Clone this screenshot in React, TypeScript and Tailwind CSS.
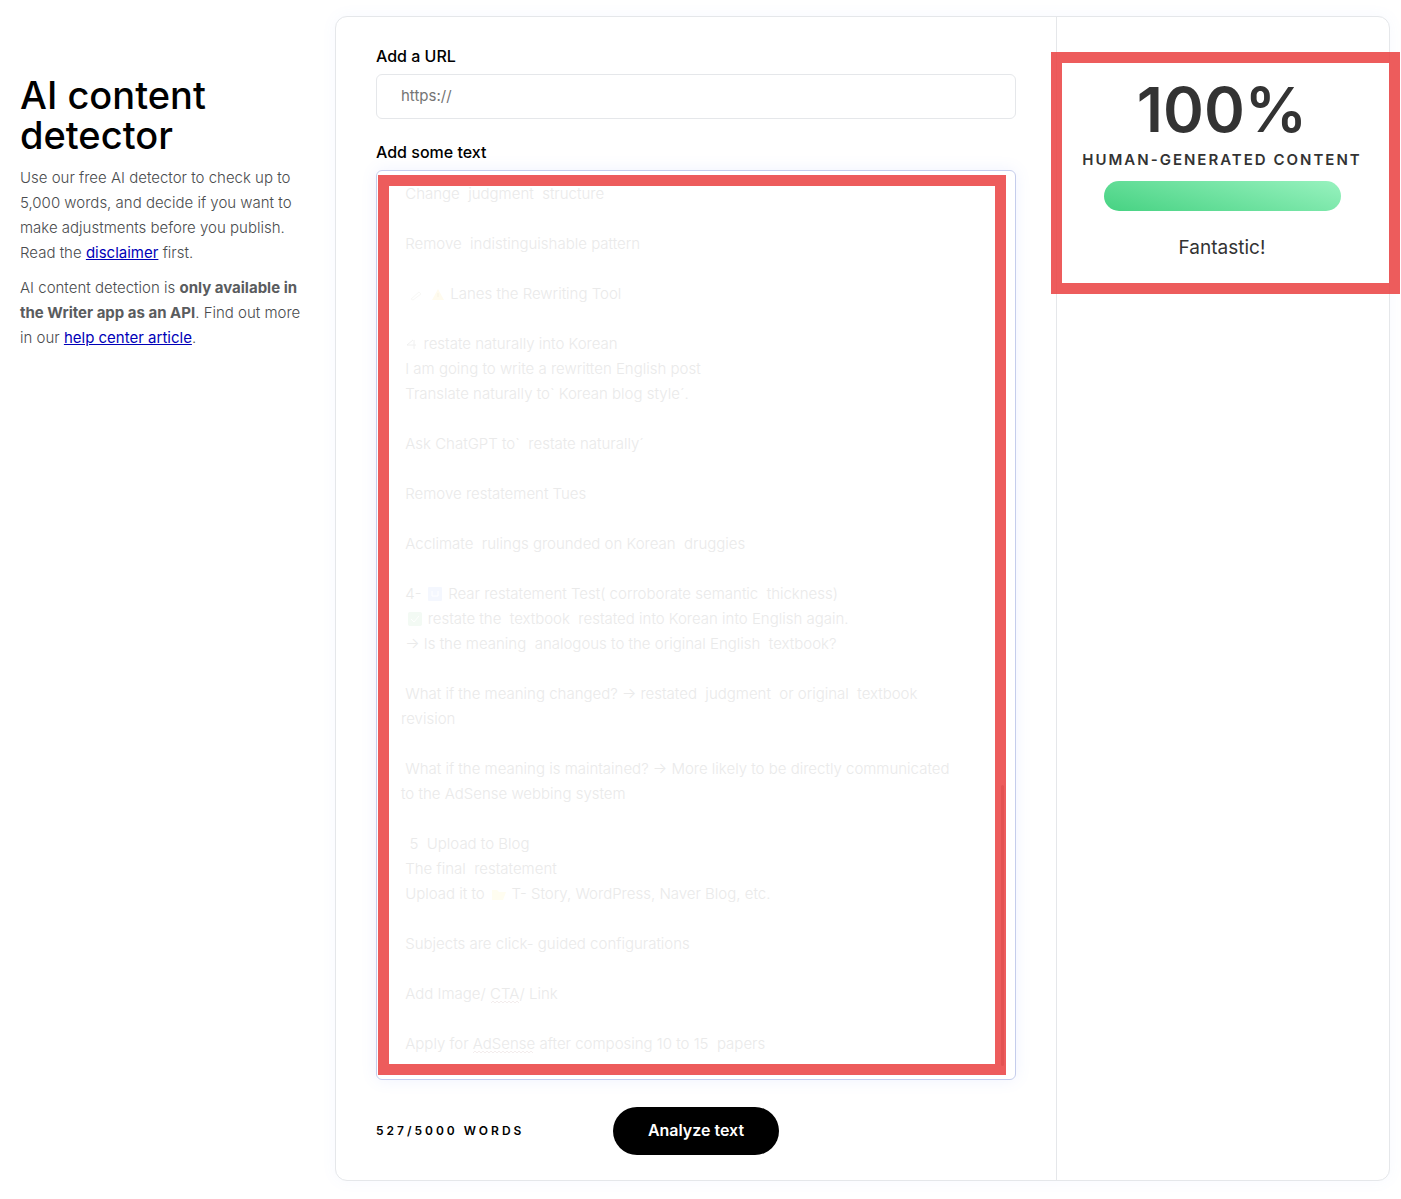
import React from "react";

const lines = [
  " Change  judgment  structure",
  "",
  " Remove  indistinguishable pattern",
  "",
  "\u2003\u2003\u2003 Lanes the Rewriting Tool",
  "",
  "\u2003\u2002restate naturally into Korean",
  " I am going to write a rewritten English post",
  " Translate naturally to` Korean blog style´.",
  "",
  " Ask ChatGPT to`  restate naturally´",
  "",
  " Remove restatement Tues",
  "",
  " Acclimate  rulings grounded on Korean  druggies",
  "",
  " 4-\u2002\u2003 Rear restatement Test( corroborate semantic  thickness)",
  "\u2002\u2003 restate the  textbook  restated into Korean into English again.",
  " → Is the meaning  analogous to the original English  textbook?",
  "",
  " What if the meaning changed? → restated  judgment  or original  textbook\nrevision",
  "",
  " What if the meaning is maintained? → More likely to be directly communicated\nto the AdSense webbing system",
  "",
  "  5  Upload to Blog",
  " The final  restatement",
  " Upload it to\u2003\u2002 T- Story, WordPress, Naver Blog, etc.",
  "",
  " Subjects are click- guided configurations",
  "",
  " Add Image/ CTA/ Link",
  "",
  " Apply for AdSense after composing 10 to 15  papers",
];

function Frame({ className }: { className: string }) {
  return (
    <div
      aria-hidden="true"
      className={`pointer-events-none absolute border-[11px] border-[#ea4646]/88 ${className}`}
    />
  );
}

function Mark({ className, children }: { className: string; children: React.ReactNode }) {
  return (
    <svg
      aria-hidden="true"
      viewBox="0 0 16 16"
      fill="none"
      className={`pointer-events-none absolute size-4 ${className}`}
    >
      {children}
    </svg>
  );
}

function Squiggle({ width, className }: { width: number; className: string }) {
  const steps = Math.floor(width / 4);
  return (
    <svg
      aria-hidden="true"
      width={width}
      height="4"
      fill="none"
      className={`pointer-events-none absolute ${className}`}
    >
      <path d={"M0 3" + "l2-2l2 2".repeat(steps)} stroke="#f3eded" />
    </svg>
  );
}

function TextMarks() {
  return (
    <>
      <Mark className="top-[117px] left-8">
        <path d="M3 12 11 5l2 2-8 6z" stroke="#f8f8f6" />
      </Mark>
      <Mark className="top-[117px] left-[54px]">
        <path d="M8 2 14 13H2z" fill="#fffbee" />
        <path d="M8 6v4" stroke="#f7f3e4" />
      </Mark>
      <Mark className="top-[166px] left-[29px]">
        <path d="M2 9h9M9 4v9M2 9l6-5" stroke="#f0f0f0" />
      </Mark>
      <Mark className="top-[416px] left-[51px]">
        <rect x="1" y="1" width="14" height="14" rx="1" fill="#f4f7fe" />
        <path d="M5 5v5h6V5" stroke="#fff" />
      </Mark>
      <Mark className="top-[441px] left-[31px]">
        <rect x="1" y="1" width="14" height="14" rx="2" fill="#f3faf4" />
        <path d="m4 8 3 3 5-6" stroke="#fff" />
      </Mark>
      <Mark className="top-[716px] left-[115px]">
        <path d="M1 4h5l2 2h7l-3 8H1z" fill="#fffdf0" />
      </Mark>
      <Squiggle width={28} className="top-[830px] left-[115px]" />
      <Squiggle width={60} className="top-[880px] left-[97px]" />
    </>
  );
}

function Intro() {
  return (
    <aside className="w-[319px] shrink-0 pt-[59px] text-[15px] leading-[25px] font-light text-[#4a4c4e]">
      <h1 className="mb-2.5 text-[38px] leading-10 font-medium text-black">
        AI content
        <br />
        detector
      </h1>
      <p className="mb-2.5 w-[284px]">
        Use our free AI detector to check up to 5,000 words, and decide if you want to make
        adjustments before you publish. Read the{" "}
        <a href="#disclaimer" className="font-normal text-[#0000b8] underline">
          disclaimer
        </a>{" "}
        first.
      </p>
      <p className="w-[284px]">
        AI content detection is{" "}
        <b className="font-bold text-[#5a5c5e]">only available in the Writer app as an API</b>. Find
        out more in our{" "}
        <a href="#help" className="font-normal text-[#0000b8] underline">
          help center article
        </a>
        .
      </p>
    </aside>
  );
}

function DetectorForm() {
  return (
    <form
      className="flex min-w-0 flex-1 flex-col px-10 pt-[27px] pb-[25px]"
      onSubmit={(e) => e.preventDefault()}
    >
      <label htmlFor="url" className="text-base leading-6 font-medium text-black">
        Add a URL
      </label>
      <input
        id="url"
        type="text"
        placeholder="https://"
        className="mt-1.5 h-[45px] rounded-md border border-[#e5e7ea] px-6 pb-0.5 text-[15px] outline-none placeholder:text-[#757575]"
      />
      <label htmlFor="text" className="mt-[21px] text-base leading-6 font-medium text-black">
        Add some text
      </label>
      <div className="relative mt-1.5 flex">
        <textarea
          id="text"
          rows={35}
          spellCheck={false}
          defaultValue={lines.join("\n")}
          className="h-[910px] w-full resize-none overflow-hidden rounded-md border border-[#c5cdec] px-6 pt-2.5 text-[15px] leading-[25px] font-light text-[#eaeaea] shadow-[0_0_16px_#5f81ff1a] outline-none"
        />
        <TextMarks />
        <span
          aria-hidden="true"
          className="absolute right-3 bottom-3.5 h-[281px] w-[3px] rounded-full bg-[#aaa]"
        />
        <Frame className="inset-y-[5px] right-[10px] left-0.5" />
      </div>
      <div className="mt-[27px] flex items-center">
        <p className="w-[237px] text-xs font-semibold tracking-[3px] text-black">
          527/5000 WORDS
        </p>
        <button
          type="submit"
          className="h-12 w-[166px] rounded-full bg-black pb-0.5 text-base font-semibold text-white"
        >
          Analyze text
        </button>
      </div>
    </form>
  );
}

function Result() {
  return (
    <section className="w-[333px] shrink-0 border-l border-[#e5e7ea] pt-[35px] text-center text-[#333]">
      <div className="relative flex h-[242px] flex-col items-center pt-[26px] pr-0.5">
        <p className="text-[62px] leading-[64px] font-semibold">100%</p>
        <p className="mt-2 text-[15px] leading-5 font-semibold tracking-[2px] whitespace-nowrap">
          HUMAN-GENERATED CONTENT
        </p>
        <div className="mt-[11px] h-[30px] w-[237px] rounded-full bg-linear-[15deg,#46d282,#98f2bf]" />
        <p className="mt-[25px] text-[19px] leading-6">Fantastic!</p>
        <Frame className="inset-y-0 -right-[11px] -left-1.5" />
      </div>
    </section>
  );
}

export default function App() {
  return (
    <main className="flex items-start overflow-x-hidden bg-white py-4 pr-[11px] pb-[18px] pl-5 font-['Inter',sans-serif]">
      <Intro />
      <div className="-ml-1 flex min-w-0 flex-1 rounded-xl border border-[#e5e7ea] bg-white shadow-[0_0_16px_#5f81ff0d]">
        <DetectorForm />
        <Result />
      </div>
    </main>
  );
}
